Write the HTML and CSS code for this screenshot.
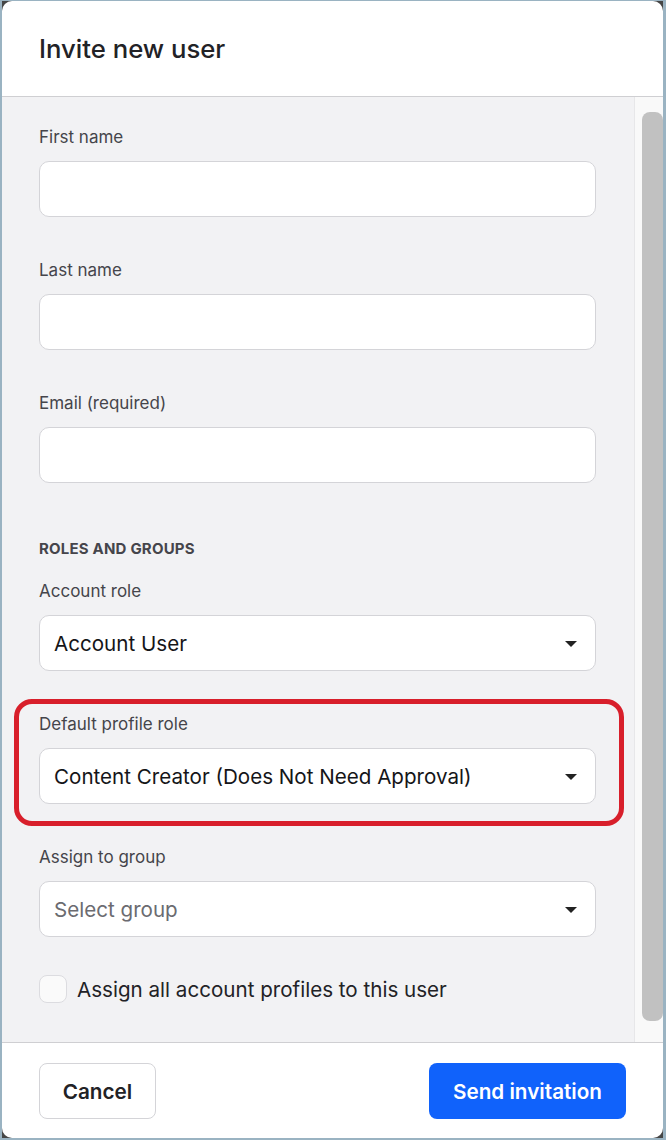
FILE: index.html
```html
<!DOCTYPE html>
<html lang="en">
<head>
<meta charset="utf-8">
<title>Invite new user</title>
<link rel="stylesheet" href="styles.css">
</head>
<body>
<div class="backdrop">
  <div class="dialog">
    <header class="dialog-header">
      <h1 class="title">Invite new user</h1>
    </header>
    <div class="dialog-body">
      <div class="content">
        <div class="field">
          <label class="label">First name</label>
          <div class="input"></div>
        </div>
        <div class="field">
          <label class="label">Last name</label>
          <div class="input"></div>
        </div>
        <div class="field">
          <label class="label">Email (required)</label>
          <div class="input"></div>
        </div>
        <div class="section-title">ROLES AND GROUPS</div>
        <div class="field">
          <label class="label">Account role</label>
          <div class="input select"><span class="value">Account User</span><span class="caret"></span></div>
        </div>
        <div class="field highlighted">
          <label class="label">Default profile role</label>
          <div class="input select"><span class="value">Content Creator (Does Not Need Approval)</span><span class="caret"></span></div>
        </div>
        <div class="field">
          <label class="label">Assign to group</label>
          <div class="input select"><span class="value placeholder">Select group</span><span class="caret"></span></div>
        </div>
        <div class="check-row">
          <span class="checkbox"></span>
          <span class="check-label">Assign all account profiles to this user</span>
        </div>
      </div>
      <div class="scrollbar"><div class="thumb"></div></div>
    </div>
    <footer class="dialog-footer">
      <button class="btn btn-secondary">Cancel</button>
      <button class="btn btn-primary">Send invitation</button>
    </footer>
  </div>
</div>
</body>
</html>
```
FILE: styles.css
```css
* { box-sizing: border-box; }
html, body { margin: 0; padding: 0; }
body {
  background: #9ab3c2;
  padding: 1px 3px 2px 2px;
  width: 666px;
  height: 1140px;
  font-family: Inter, "Noto Sans", "Liberation Sans", sans-serif;
  color: #222226;
}
.backdrop {
  background: #464646;
  height: 1137px;
}
.dialog {
  background: #fff;
  border-radius: 10px;
  height: 1137px;
  overflow: hidden;
  display: flex;
  flex-direction: column;
}
.dialog-header {
  height: 96px;
  border-bottom: 1px solid #cfcfd2;
  display: flex;
  align-items: center;
  padding: 0 37px;
  flex-shrink: 0;
}
.title {
  margin: 0;
  font-size: 25.7px;
  font-weight: 500;
  color: #222226;
  padding-bottom: 1px;
}
.dialog-body {
  flex: 1;
  display: flex;
  background: #f2f2f4;
  min-height: 0;
}
.content {
  flex: 1;
  padding: 28px 38px 0 37px;
}
.scrollbar {
  width: 29px;
  background: #f9f9f9;
  border-left: 1px solid #e7e7e9;
  padding: 15px 0 21px 7px;
  display: flex;
}
.thumb {
  width: 15px;
  background: #c1c1c1;
  border-radius: 8px;
  flex: 1;
}
.field {
  display: flex;
  flex-direction: column;
  gap: 12px;
  margin-bottom: 41px;
  position: relative;
}
.label {
  font-size: 17px;
  line-height: 24px;
  color: #45454b;
}
.input {
  height: 56px;
  background: #fff;
  border: 1px solid #d4d4d8;
  border-radius: 10px;
}
.select {
  display: flex;
  align-items: center;
  justify-content: space-between;
  padding: 0 18px 0 14px;
}
.value {
  font-size: 20.6px;
  color: #151518;
}
.placeholder { color: #6b6b70; }
.caret {
  width: 0;
  height: 0;
  border-left: 6px solid transparent;
  border-right: 6px solid transparent;
  border-top: 6px solid #222;
  margin-top: 2px;
}
.section-title {
  font-size: 15px;
  font-weight: 700;
  line-height: 20px;
  color: #45454b;
  padding-top: 15px;
  margin-bottom: 20px;
  letter-spacing: 0.2px;
}
.highlighted::after {
  content: "";
  position: absolute;
  top: -13px;
  bottom: -22px;
  left: -25px;
  right: -28px;
  border: 5px solid #d81f2b;
  border-radius: 18px;
  pointer-events: none;
}
.check-row {
  display: flex;
  align-items: center;
  gap: 10px;
  margin-top: -3px;
}
.checkbox {
  width: 28px;
  height: 28px;
  border: 1px solid #dcdce0;
  border-radius: 8px;
  background: #fafafa;
}
.check-label {
  font-size: 20.6px;
  color: #222226;
}
.dialog-footer {
  height: 96px;
  border-top: 1px solid #cfcfd2;
  flex-shrink: 0;
  display: flex;
  justify-content: space-between;
  align-items: flex-start;
  padding: 20px 37px 0 37px;
}
.btn {
  height: 56px;
  border-radius: 8px;
  font-family: inherit;
  font-size: 20.7px;
  font-weight: 600;
  padding: 0;
  cursor: pointer;
}
.btn-secondary {
  background: #fff;
  border: 1px solid #d4d4d8;
  color: #222226;
  width: 117px;
}
.btn-primary {
  background: #1062fb;
  border: 0;
  color: #fff;
  width: 197px;
}
```
